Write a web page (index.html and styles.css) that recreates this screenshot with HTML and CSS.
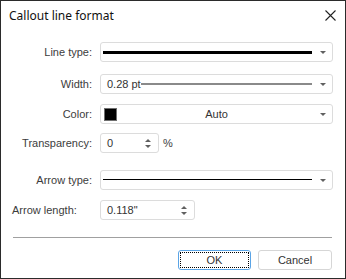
FILE: index.html
```html
<!DOCTYPE html>
<html lang="en">
<head>
    <meta charset="utf-8">
    <title>Callout line format</title>
    <link rel="stylesheet" href="styles.css">
</head>
<body>
    <div class="dialog">
        <!-- title bar -->
        <div class="title-bar">
            <span class="title">Callout line format</span>
            <span class="close-btn">
                <svg width="11" height="11" viewBox="0 0 11 11"><path d="M0.5 0.5 L10.5 10.5 M10.5 0.5 L0.5 10.5" stroke="#222" stroke-width="1.1" fill="none"/></svg>
            </span>
        </div>

        <div class="content">
            <div class="row row-linetype">
                <label class="label">Line type:</label>
                <div class="combo">
                    <div class="combo-value"><span class="line line-thick"></span></div>
                    <span class="drop-arrow"></span>
                </div>
            </div>

            <div class="row row-width">
                <label class="label">Width:</label>
                <div class="combo">
                    <div class="combo-value"><span class="combo-text">0.28 pt</span><span class="line line-gray"></span></div>
                    <span class="drop-arrow"></span>
                </div>
            </div>

            <div class="row row-color">
                <label class="label">Color:</label>
                <div class="combo">
                    <div class="combo-value"><span class="swatch"></span><span class="color-name">Auto</span></div>
                    <span class="drop-arrow"></span>
                </div>
            </div>

            <div class="row row-transparency">
                <label class="label">Transparency:</label>
                <div class="spin spin-small">
                    <span class="spin-text">0</span>
                    <span class="spin-arrows"><span class="up"></span><span class="down"></span></span>
                </div>
                <span class="unit">%</span>
            </div>

            <div class="row row-arrowtype">
                <label class="label">Arrow type:</label>
                <div class="combo">
                    <div class="combo-value"><span class="line line-thin"></span></div>
                    <span class="drop-arrow"></span>
                </div>
            </div>

            <div class="row row-arrowlength">
                <label class="label label-left">Arrow length:</label>
                <div class="spin spin-wide">
                    <span class="spin-text">0.118"</span>
                    <span class="spin-arrows"><span class="up"></span><span class="down"></span></span>
                </div>
            </div>
        </div>

        <div class="footer">
            <div class="separator"></div>
            <div class="buttons">
                <button class="btn btn-ok"><span class="focus">OK</span></button>
                <button class="btn">Cancel</button>
            </div>
        </div>
    </div>
</body>
</html>
```

FILE: styles.css
```css
/* 对话框基础样式 */
body {
    margin: 0;
    background-color: #ffffff;
    font-family: "Liberation Sans", Arial, sans-serif;
    font-size: 11px;
    color: #333333;
}

.dialog {
    width: 346px;
    height: 279px;
    box-sizing: border-box;
    border: 1px solid #2b2b2b;
    display: flex;
    flex-direction: column;
    background-color: #ffffff;
}

/* 标题栏 */
.title-bar {
    height: 31px;
    display: flex;
    align-items: center;
    justify-content: space-between;
    padding: 0 9px 0 8px;
}

.title {
    font-family: "Noto Sans", "Open Sans", sans-serif;
    font-size: 12px;
    color: #111111;
    margin-top: -2px;
}

.close-btn {
    display: flex;
    margin-top: -2px;
}

/* 表单区域 */
.content {
    display: flex;
    flex-direction: column;
    padding-top: 10px;
}

.row {
    display: flex;
    align-items: center;
    height: 20px;
}

.row-width { margin-top: 12px; }
.row-color { margin-top: 10px; }
.row-transparency { margin-top: 9px; }
.row-arrowtype { margin-top: 17px; }
.row-arrowlength { margin-top: 10px; }

.label {
    width: 91px;
    text-align: right;
    color: #3c3c3c;
    margin-right: 8px;
}

.label-left {
    text-align: left;
    padding-left: 11px;
    box-sizing: border-box;
}

/* 下拉框 */
.combo {
    width: 233px;
    height: 20px;
    box-sizing: border-box;
    border: 1px solid #dcdcdc;
    border-radius: 3px;
    display: flex;
    align-items: center;
}

.combo-value {
    flex: 1;
    display: flex;
    align-items: center;
    padding-left: 2px;
    height: 100%;
}

.drop-arrow {
    width: 0;
    height: 0;
    border-left: 3px solid transparent;
    border-right: 3px solid transparent;
    border-top: 3px solid #606060;
    margin: 0 6px 0 8px;
}

.line {
    flex: 1;
    display: block;
}

.line-thick {
    height: 3px;
    background-color: #000000;
}

.line-gray {
    height: 2px;
    background-color: #8a8a8a;
}

.line-thin {
    height: 1px;
    background-color: #000000;
    margin-top: -1px;
}

.combo-text {
    padding-left: 4px;
    color: #333333;
}

.swatch {
    width: 13px;
    height: 13px;
    box-sizing: border-box;
    background-color: #000000;
    border: 1px solid #6e6e6e;
    margin-left: 1px;
}

.color-name {
    flex: 1;
    text-align: center;
    color: #333333;
    padding-left: 4px;
}

/* 数值输入框 */
.spin {
    height: 20px;
    box-sizing: border-box;
    border: 1px solid #dcdcdc;
    border-radius: 3px;
    display: flex;
    align-items: center;
    justify-content: space-between;
    padding: 0 7px 0 6px;
}

.spin-small { width: 59px; }
.spin-wide { width: 95px; }

.spin-arrows {
    display: flex;
    flex-direction: column;
    gap: 3px;
}

.spin-arrows .up {
    width: 0;
    height: 0;
    border-left: 3px solid transparent;
    border-right: 3px solid transparent;
    border-bottom: 3px solid #606060;
}

.spin-arrows .down {
    width: 0;
    height: 0;
    border-left: 3px solid transparent;
    border-right: 3px solid transparent;
    border-top: 3px solid #606060;
}

.unit {
    margin-left: 4px;
    color: #3c3c3c;
}

/* 底部按钮 */
.footer {
    display: flex;
    flex-direction: column;
    padding: 0 13px 0 12px;
    margin-top: 17px;
}

.separator {
    height: 1px;
    background-color: #a0a0a0;
}

.buttons {
    display: flex;
    justify-content: flex-end;
    gap: 7px;
    margin-top: 12px;
}

.btn {
    height: 20px;
    box-sizing: border-box;
    font-family: "Liberation Sans", Arial, sans-serif;
    font-size: 11px;
    color: #333333;
    background-color: #ffffff;
    border: 1px solid #d6d6d6;
    border-radius: 3px;
    padding: 0;
    width: 74px;
}

.btn-ok {
    width: 73px;
    border-color: #5aa4e6;
    padding: 1px;
}

.focus {
    display: flex;
    align-items: center;
    justify-content: center;
    height: 100%;
    box-sizing: border-box;
    border: 1px dotted #000000;
}
```
